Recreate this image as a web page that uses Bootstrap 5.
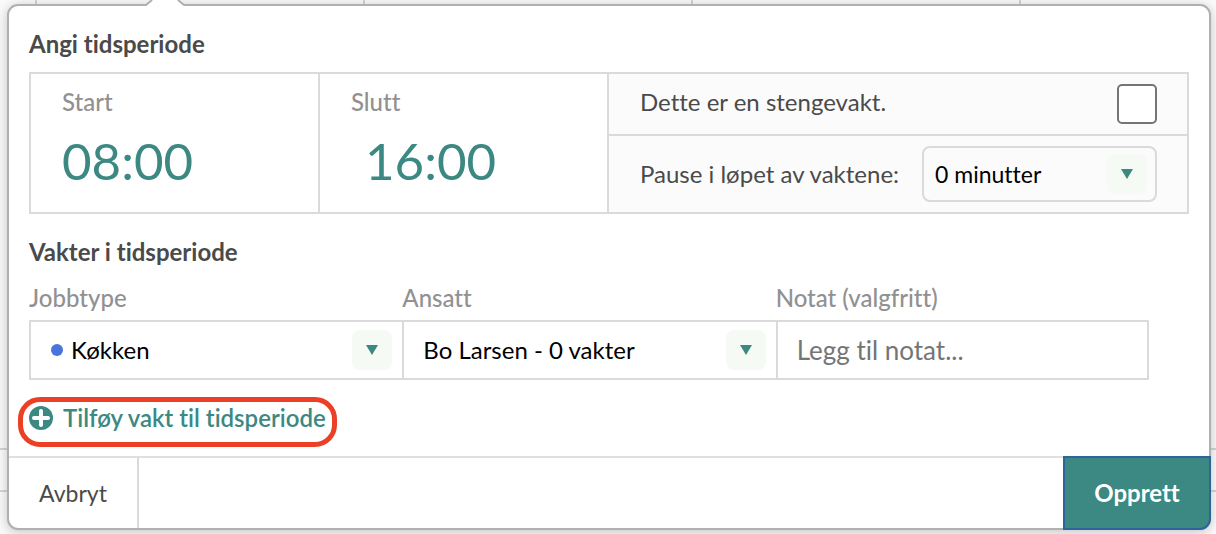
<!DOCTYPE html>
<html lang="nb">
<head>
<meta charset="utf-8">
<meta name="viewport" content="width=device-width, initial-scale=1">
<title>Angi tidsperiode</title>
<link href="https://cdn.jsdelivr.net/npm/bootstrap@5.3.0/dist/css/bootstrap.min.css" rel="stylesheet">
<style>
:root { --teal: #3c8882; --line: #dadada; --ink: #4a4a4a; --muted: #919191; }
body {
  font-family: Lato, sans-serif; font-size: 24px; line-height: 30px; color: var(--ink);
  font-variant-ligatures: none;
  background:
    linear-gradient(#d4d4d4 2px, #fbfbfb 2px 42px, #d4d4d4 42px 44px, transparent 44px) 0 448px / 100% 44px no-repeat,
    repeating-linear-gradient(90deg, #d4d4d4 0 2px, transparent 2px 328px) 35px 0 / 100% 448px no-repeat,
    #fafafa;
}
input, select, button { font-variant-ligatures: none; }
.shift-popover { margin: 4px 5px 4px 7px; border: 2px solid #b0b0b0; border-radius: 11px; box-shadow: 0 2px 12px rgba(0,0,0,.22); }
.tip { top: -6px; left: 136px; }
.content-area { padding: 23px 20px 9px; }
h2 { font-size: 24px; line-height: 30px; font-weight: 700; margin: 0; }
.period { display: grid; grid-template-columns: 1fr 1fr 2fr; border: 2px solid var(--line); margin: 13px 0 23px; }
.time-cell { padding: 13px 31px 21px; border-right: 2px solid var(--line); }
.field-name { color: var(--muted); font-weight: 500; }
.time-input { font-size: 51px; line-height: 60px; height: 60px; color: var(--teal); border: 0; padding: 0; width: 100%; margin-top: 14px; background: none; }
.time-cell.end-time .time-input { padding-left: 14px; }
.options { background: #fbfbfb; }
.option-row { padding: 0 30px 0 31px; }
.option-row.closing { height: 62px; border-bottom: 2px solid var(--line); }
.option-row.closing label { padding-bottom: 4px; }
.option-row.pause { height: 76px; }
.closing .form-check-input { width: 40px; height: 40px; margin: 0; border: 2px solid #757575; border-radius: 5px; }
.pick {
  appearance: none; border: 0; color: #000; height: 56px; padding: 0 56px 0 0; width: 100%; outline-offset: -2px;
  background: url("data:image/svg+xml,%3Csvg xmlns='http://www.w3.org/2000/svg' width='40' height='40'%3E%3Crect width='40' height='40' rx='8' fill='%23f5faf5'/%3E%3Cpath d='M14 15h12l-6 10z' fill='%233c8882'/%3E%3C/svg%3E") right 10px center no-repeat;
}
.pause .pick { width: 235px; font-size: 23px; border: 2px solid var(--line); border-radius: 8px; padding-left: 11px; background-position: right 8px center; }
.shift-row { display: grid; grid-template-columns: 1fr 1fr 1fr; margin: 16px 40px 17px 0; }
.shift-row .slot { border: 2px solid var(--line); border-right: 0; margin-top: 7px; height: 60px; padding-left: 19px; }
.shift-row > :last-child .slot { border-right: 2px solid var(--line); }
.dot { width: 12px; height: 12px; background: #4874dc; margin: 0 8px 0 1px; }
.note { border: 0; padding: 0; width: 100%; height: 56px; font-size: 26px; background: none; }
.note::placeholder { color: #757575; opacity: 1; }
.ring { border: 5px solid #eb4025; border-radius: 22px; height: 50px; margin-left: -11px; padding: 1px 6px 0; }
.add-btn { border: 0; background: none; padding: 0; color: var(--teal); font-weight: 600; gap: 10px; }
.foot { border-top: 2px solid #e0e0e0; height: 72px; }
.cancel { border: 0; border-right: 2px solid var(--line); background: none; width: 130px; font-size: 23px; color: var(--ink); border-radius: 0 0 0 9px; }
.create { border: 2px solid #30639c; background: var(--teal); color: #fff; font-weight: 700; width: 148px; margin: -2px -2px -2px 0; border-radius: 0 0 11px 0; }
</style>
</head>
<body>
<main class="shift-popover bg-white position-relative">
  <svg class="tip position-absolute" width="40" height="8" viewBox="0 0 40 8" aria-hidden="true"><path d="M0 8 2 5 8 0H32L38 5 40 8Z" fill="#fff"/><path d="M1 5 7 0M39 5 33 0" stroke="#b0b0b0" stroke-width="2"/></svg>
  <form>
    <div class="content-area">
      <h2>Angi tidsperiode</h2>
      <section class="period">
        <div class="time-cell">
          <label class="field-name d-block" for="start">Start</label>
          <input class="time-input" id="start" type="text" value="08:00">
        </div>
        <div class="time-cell end-time">
          <label class="field-name d-block" for="slutt">Slutt</label>
          <input class="time-input" id="slutt" type="text" value="16:00">
        </div>
        <div class="options">
          <div class="option-row closing d-flex align-items-center justify-content-between">
            <label for="stenge">Dette er en stengevakt.</label>
            <input class="form-check-input" id="stenge" type="checkbox">
          </div>
          <div class="option-row pause d-flex align-items-center justify-content-between">
            <label for="pause">Pause i løpet av vaktene:</label>
            <select class="pick" id="pause"><option>0 minutter</option></select>
          </div>
        </div>
      </section>
      <h2>Vakter i tidsperiode</h2>
      <section class="shift-row">
        <div>
          <label class="field-name d-block" for="jobb">Jobbtype</label>
          <div class="slot d-flex align-items-center">
            <span class="dot rounded-circle flex-shrink-0"></span>
            <select class="pick" id="jobb"><option>Køkken</option></select>
          </div>
        </div>
        <div>
          <label class="field-name d-block" for="ansatt">Ansatt</label>
          <div class="slot"><select class="pick" id="ansatt"><option>Bo Larsen - 0 vakter</option></select></div>
        </div>
        <div>
          <label class="field-name d-block" for="notat">Notat (valgfritt)</label>
          <div class="slot"><input class="note" id="notat" type="text" placeholder="Legg til notat..."></div>
        </div>
      </section>
      <div class="ring d-inline-flex align-items-start align-top">
        <button class="add-btn d-flex align-items-center" type="button">
          <svg width="24" height="30" viewBox="0 0 24 30" aria-hidden="true"><circle cx="12" cy="15" r="12" fill="#3c8882"/><path d="M12 8v14M5 15h14" stroke="#fff" stroke-width="4" stroke-linecap="round"/></svg>
          Tilføy vakt til tidsperiode
        </button>
      </div>
    </div>
    <div class="foot d-flex justify-content-between">
      <button class="cancel" type="button">Avbryt</button>
      <button class="create" type="submit">Opprett</button>
    </div>
  </form>
</main>
<script src="https://cdn.jsdelivr.net/npm/bootstrap@5.3.0/dist/js/bootstrap.bundle.min.js"></script>
</body>
</html>
